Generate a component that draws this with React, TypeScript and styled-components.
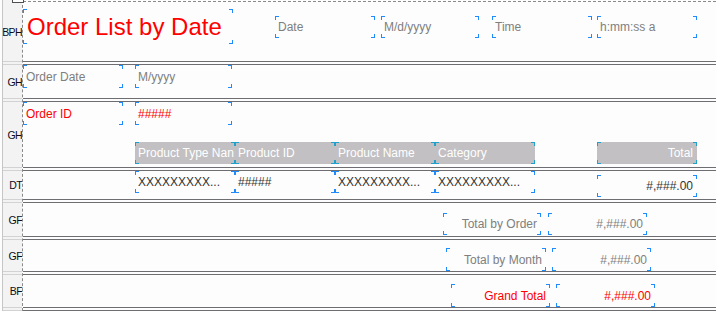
import React from "react"
import styled, { createGlobalStyle } from "styled-components"

const GlobalStyle = createGlobalStyle`
    html, body {
        margin: 0;
        padding: 0;
        background: #fcfdfc;
    }
    body {
        font-family: "Liberation Sans", Arial, sans-serif;
    }
`

const Designer = styled.div`
    position: relative;
    display: flex;
    width: 716px;
    height: 311px;
    overflow: hidden;
    background: #fcfdfc;
`

const Gutter = styled.div`
    display: flex;
    flex-direction: column;
    width: 19px;
    margin-left: 2px;
    border-left: 1px solid #c6c6c6;
    background: #f3f3f3;
`

const Canvas = styled.div`
    display: flex;
    flex-direction: column;
    flex: 1;
    border-left: 1px dashed #8a8a8a;
`

const GutterTop = styled.div`
    height: 2px;
`

const CanvasTop = styled.div`
    height: 2px;
    box-sizing: border-box;
    border-bottom: 1px dashed #8a8a8a;
`

const Handle = styled.div`
    position: absolute;
    left: 12px;
    top: -1px;
    width: 10px;
    height: 2px;
    border: 1px solid #505050;
    background: #fff;
`

const BandLabel = styled.div<{ $h: number }>`
    display: flex;
    align-items: center;
    justify-content: flex-end;
    height: ${(p) => p.$h}px;
    font-size: 10.5px;
    letter-spacing: -0.6px;
    color: #080c22;
`

const GutterSep = styled.div`
    height: 2px;
    border-top: 1px solid #d2d2d2;
    border-bottom: 1px solid #d2d2d2;
`

const Band = styled.div<{ $h: number }>`
    position: relative;
    height: ${(p) => p.$h}px;
`

const BandSep = styled.div`
    height: 2px;
    border-top: 1px solid #6e6e72;
    border-bottom: 1px solid #6e6e72;
`

const tones = {
    gray: "#7f7f7f",
    red: "#ff0000",
    dark: "#333333",
    white: "#ffffff",
}

type Tone = keyof typeof tones

const corners = (c: string) => `
    linear-gradient(${c}, ${c}) left top / 4px 1px no-repeat,
    linear-gradient(${c}, ${c}) left top / 1px 4px no-repeat,
    linear-gradient(${c}, ${c}) right top / 4px 1px no-repeat,
    linear-gradient(${c}, ${c}) right top / 1px 4px no-repeat,
    linear-gradient(${c}, ${c}) left bottom / 4px 1px no-repeat,
    linear-gradient(${c}, ${c}) left bottom / 1px 4px no-repeat,
    linear-gradient(${c}, ${c}) right bottom / 4px 1px no-repeat,
    linear-gradient(${c}, ${c}) right bottom / 1px 4px no-repeat
`

const Field = styled.div<{
    $x: number
    $y: number
    $w: number
    $h: number
    $tone: Tone
    $right?: boolean
    $header?: boolean
    $size?: number
}>`
    position: absolute;
    left: ${(p) => p.$x}px;
    top: ${(p) => p.$y}px;
    width: ${(p) => p.$w}px;
    height: ${(p) => p.$h}px;
    box-sizing: border-box;
    display: flex;
    align-items: center;
    justify-content: ${(p) => (p.$right ? "flex-end" : "flex-start")};
    padding: 0 ${(p) => (p.$right ? 4 : 0)}px 0 ${(p) => (p.$size ? 4 : 3)}px;
    overflow: hidden;
    white-space: nowrap;
    font-size: ${(p) => p.$size ?? 12}px;
    color: ${(p) => tones[p.$tone]};
    background: ${(p) => (p.$header ? "#c2c0c2" : "transparent")};

    &::after {
        content: "";
        position: absolute;
        inset: 0;
        pointer-events: none;
        background: ${(p) => corners(p.$header ? "#1ea2cc" : "#1e8cff")};
    }
`

type F = {
    text: string
    x: number
    y: number
    w: number
    h: number
    tone: Tone
    right?: boolean
    header?: boolean
    size?: number
}

// the designer clips long captions at the field edge
const bands: { label: string; height: number; fields: F[] }[] = [
    {
        label: "BPH",
        height: 59,
        fields: [
            { text: "Order List by Date", x: 0, y: 7, w: 210, h: 35, tone: "red", size: 24 },
            { text: "Date", x: 252, y: 14, w: 100, h: 22, tone: "gray" },
            { text: "M/d/yyyy", x: 358, y: 14, w: 98, h: 22, tone: "gray" },
            { text: "Time", x: 469, y: 14, w: 100, h: 22, tone: "gray" },
            { text: "h:mm:ss a", x: 574, y: 14, w: 100, h: 22, tone: "gray" },
        ],
    },
    {
        label: "GH",
        height: 33,
        fields: [
            { text: "Order Date", x: 0, y: 0, w: 100, h: 23, tone: "gray" },
            { text: "M/yyyy", x: 112, y: 0, w: 97, h: 23, tone: "gray" },
        ],
    },
    {
        label: "GH",
        height: 65,
        fields: [
            { text: "Order ID", x: 0, y: 0, w: 100, h: 23, tone: "red" },
            { text: "#####", x: 112, y: 0, w: 97, h: 23, tone: "red" },
            { text: "Product Type Nan", x: 112, y: 40, w: 100, h: 22, tone: "white", header: true },
            { text: "Product ID", x: 212, y: 40, w: 100, h: 22, tone: "white", header: true },
            { text: "Product Name", x: 312, y: 40, w: 100, h: 22, tone: "white", header: true },
            { text: "Category", x: 412, y: 40, w: 100, h: 22, tone: "white", header: true },
            { text: "Total", x: 574, y: 40, w: 100, h: 22, tone: "white", header: true, right: true },
        ],
    },
    {
        label: "DT",
        height: 28,
        fields: [
            { text: "XXXXXXXXX...", x: 112, y: 0, w: 100, h: 22, tone: "dark" },
            { text: "#####", x: 212, y: 0, w: 100, h: 22, tone: "dark" },
            { text: "XXXXXXXXX...", x: 312, y: 0, w: 100, h: 22, tone: "dark" },
            { text: "XXXXXXXXX...", x: 412, y: 0, w: 100, h: 22, tone: "dark" },
            { text: "#,###.00", x: 574, y: 4, w: 100, h: 22, tone: "dark", right: true },
        ],
    },
    {
        label: "GF",
        height: 33,
        fields: [
            { text: "Total by Order", x: 420, y: 10, w: 98, h: 22, tone: "gray", right: true },
            { text: "#,###.00", x: 525, y: 10, w: 99, h: 22, tone: "gray", right: true },
        ],
    },
    {
        label: "GF",
        height: 31,
        fields: [
            { text: "Total by Month", x: 423, y: 8, w: 100, h: 23, tone: "gray", right: true },
            { text: "#,###.00", x: 529, y: 8, w: 99, h: 23, tone: "gray", right: true },
        ],
    },
    {
        label: "BF",
        height: 32,
        fields: [
            { text: "Grand Total", x: 428, y: 9, w: 99, h: 23, tone: "red", right: true },
            { text: "#,###.00", x: 533, y: 9, w: 99, h: 23, tone: "red", right: true },
        ],
    },
]

export default function App() {
    return (
        <>
            <GlobalStyle />
            <Designer>
                <Gutter>
                    <GutterTop />
                    {bands.map((b, i) => (
                        <React.Fragment key={i}>
                            <BandLabel $h={b.height}>{b.label}</BandLabel>
                            <GutterSep />
                        </React.Fragment>
                    ))}
                </Gutter>
                <Canvas>
                    <CanvasTop />
                    {bands.map((b, i) => (
                        <React.Fragment key={i}>
                            <Band $h={b.height}>
                                {b.fields.map((f, j) => (
                                    <Field
                                        key={j}
                                        $x={f.x}
                                        $y={f.y}
                                        $w={f.w}
                                        $h={f.h}
                                        $tone={f.tone}
                                        $right={f.right}
                                        $header={f.header}
                                        $size={f.size}
                                    >
                                        {f.text}
                                    </Field>
                                ))}
                            </Band>
                            <BandSep />
                        </React.Fragment>
                    ))}
                </Canvas>
                <Handle />
            </Designer>
        </>
    )
}
